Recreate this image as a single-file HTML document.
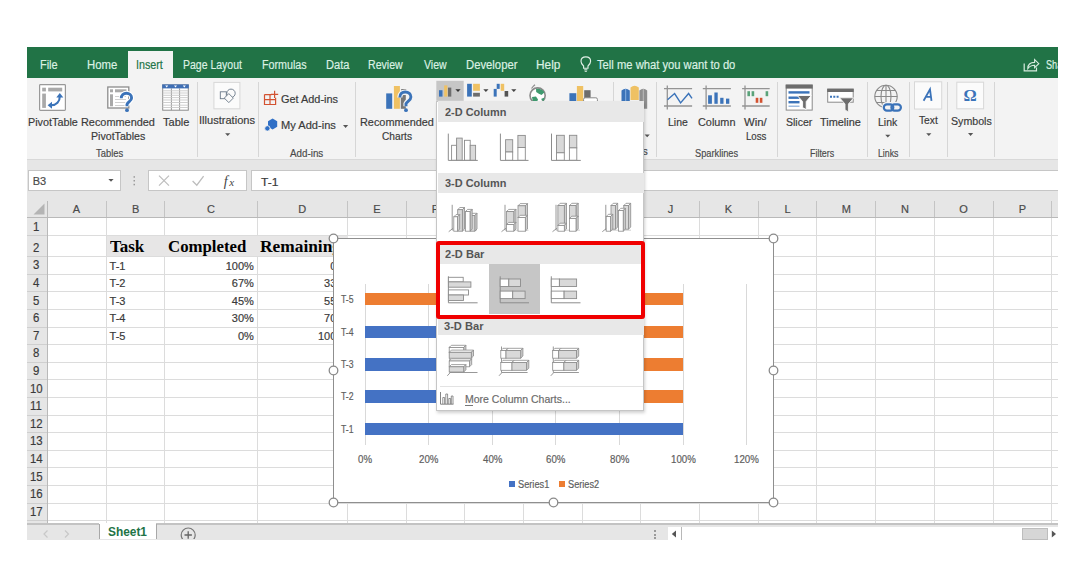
<!DOCTYPE html>
<html><head><meta charset="utf-8"><style>
html,body{margin:0;padding:0}
body{width:1090px;height:579px;position:relative;overflow:hidden;background:#fff;font-family:"Liberation Sans",sans-serif}
svg{display:block}
</style></head><body>
<div style="position:absolute;left:27px;top:47px;width:1030.5px;height:31px;background:#217346;"></div>
<div style="position:absolute;left:128px;top:51px;width:45px;height:27px;background:#f3f3f3;"></div>
<div style="position:absolute;left:27px;top:78px;width:1030.5px;height:82px;background:#f3f3f3;"></div>
<div style="position:absolute;left:27px;top:159px;width:1030.5px;height:1px;background:#d8d8d8;"></div>
<div style="position:absolute;left:197.1px;top:82px;width:1px;height:75px;background:#d6d6d6;"></div>
<div style="position:absolute;left:258.4px;top:82px;width:1px;height:75px;background:#d6d6d6;"></div>
<div style="position:absolute;left:354.5px;top:82px;width:1px;height:75px;background:#d6d6d6;"></div>
<div style="position:absolute;left:613.4px;top:82px;width:1px;height:75px;background:#d6d6d6;"></div>
<div style="position:absolute;left:656.2px;top:82px;width:1px;height:75px;background:#d6d6d6;"></div>
<div style="position:absolute;left:777.3px;top:82px;width:1px;height:75px;background:#d6d6d6;"></div>
<div style="position:absolute;left:866.7px;top:82px;width:1px;height:75px;background:#d6d6d6;"></div>
<div style="position:absolute;left:909.1px;top:82px;width:1px;height:75px;background:#d6d6d6;"></div>
<div style="position:absolute;left:947.4px;top:82px;width:1px;height:75px;background:#d6d6d6;"></div>
<div style="position:absolute;left:993.9px;top:82px;width:1px;height:75px;background:#d6d6d6;"></div>
<svg style="position:absolute;left:0;top:0" width="1090" height="579" viewBox="0 0 1090 579">
<rect x="39.6" y="84.6" width="25.8" height="25.8" rx="0.8" fill="#fff" stroke="#999" stroke-width="1.2"/>
<rect x="42.2" y="87.7" width="3.7" height="3.7" fill="#a9a9a9"/>
<rect x="48.2" y="87.7" width="14" height="3.7" fill="#a9a9a9"/>
<rect x="42.2" y="93.6" width="3.7" height="14.3" fill="#a9a9a9"/>
<path d="M51 105.3 C56.5 105.3 59.8 101.5 59.8 96.5" stroke="#3b73b9" stroke-width="2.1" fill="none"/>
<path d="M47.6 105.3 L52 101.8 L52 108.8 Z" fill="#3b73b9"/>
<path d="M59.8 93 L56.3 97.4 L63.3 97.4 Z" fill="#3b73b9"/>

<rect x="107.8" y="87" width="21" height="21" fill="#fff" stroke="#8c8c8c" stroke-width="1.3"/>
<rect x="110" y="89.3" width="3" height="3" fill="#a9a9a9"/>
<rect x="115" y="89.3" width="11.5" height="3" fill="#a9a9a9"/>
<rect x="110" y="94.3" width="3" height="12" fill="#a9a9a9"/>
<path d="M115 96.5 H126 M115 99.5 H126 M115 102.5 H126 M115 105.5 H126" stroke="#d0d0d0" stroke-width="1"/>
<path d="M121.3 98.3 C121.3 95 123.6 93.3 126.4 93.3 C129.4 93.3 131.6 95.3 131.6 98 C131.6 101.2 127.8 101.8 127 104.5 L127 106.3" stroke="#fff" stroke-width="5" fill="none"/>
<path d="M121.3 98.3 C121.3 95 123.6 93.3 126.4 93.3 C129.4 93.3 131.6 95.3 131.6 98 C131.6 101.2 127.8 101.8 127 104.5 L127 106.3" stroke="#3b73b9" stroke-width="2.9" fill="none"/>
<circle cx="127" cy="110.2" r="1.9" fill="#3b73b9"/>

<rect x="162.7" y="84.9" width="25.6" height="25.3" fill="#fff" stroke="#8c8c8c" stroke-width="1"/>
<path d="M171.4 88.4 V110.2 M179.6 88.4 V110.2" stroke="#9a9a9a" stroke-width="1"/>
<path d="M162.7 90.8 H188.3 M162.7 93 H188.3 M162.7 95.3 H188.3 M162.7 97.6 H188.3 M162.7 100 H188.3 M162.7 102.5 H188.3 M162.7 105.2 H188.3 M162.7 107.5 H188.3" stroke="#c9c9c9" stroke-width="0.9"/>
<rect x="162.2" y="84.4" width="26.6" height="4" fill="#3f6fb5"/>
<path d="M165.2 85.4 L168.2 85.4 L166.7 87.4Z M174 85.4 L177 85.4 L175.5 87.4Z M182.8 85.4 L185.8 85.4 L184.3 87.4Z" fill="#fff"/>

<rect x="213.9" y="82.4" width="26" height="26.4" fill="#fbfbfb" stroke="#d8d8d8" stroke-width="1"/>
<rect x="220.3" y="91.8" width="6" height="6.9" fill="none" stroke="#6a7888" stroke-width="0.9"/>
<circle cx="231" cy="93.3" r="4.2" fill="none" stroke="#6a7888" stroke-width="0.9"/>
<path d="M228.8 93.6 L233.3 98.1 L228.8 102.6 L224.3 98.1 Z" fill="#fbfbfb" stroke="#6a7888" stroke-width="0.9"/>
<path d="M225.1 133.29999999999998 L230.29999999999998 133.29999999999998 L227.7 136.1 Z" fill="#555"/>

<path d="M264.5 94.6 H271.5 M264.5 94.6 V104.5 H275.6 V97.8 M270 94.6 V104.5 M264.5 99.6 H275.6" stroke="#d35230" fill="none" stroke-width="1.2"/>
<path d="M271 94.4 H278.2 M274.6 90.8 V98" stroke="#d35230" stroke-width="1.2"/>
<path d="M272.6 118.6 L277.2 121.3 L277.2 126.7 L272.6 129.4 L268 126.7 L268 121.3 Z" fill="#2f6fc6"/>
<circle cx="267.4" cy="128.4" r="2.7" fill="#2f6fc6" stroke="#f3f3f3" stroke-width="0.9"/>
<path d="M343.0 125.10000000000001 L348.20000000000005 125.10000000000001 L345.6 127.9 Z" fill="#555"/>

<rect x="386.2" y="93.4" width="6" height="15.4" fill="#3b73b9"/>
<rect x="393.9" y="86" width="6" height="22.8" fill="#efc163"/>
<rect x="401.2" y="89" width="5" height="1.8" fill="#777"/>
<rect x="400.8" y="95" width="5" height="13.8" fill="#777"/>
<path d="M399.8 97.4 C399.8 93.8 402.2 92 405.2 92 C408.6 92 410.9 94.2 410.9 97 C410.9 100.4 407.2 101 406 103.7 L406 106.3" stroke="#f3f3f3" stroke-width="5.2" fill="none"/>
<path d="M399.8 97.4 C399.8 93.8 402.2 92 405.2 92 C408.6 92 410.9 94.2 410.9 97 C410.9 100.4 407.2 101 406 103.7 L406 106.3" stroke="#3b73b9" stroke-width="2.9" fill="none"/>
<circle cx="406" cy="110.2" r="1.9" fill="#3b73b9"/>

<rect x="436.3" y="80.8" width="27.4" height="20" fill="#c6c6c6"/>
<rect x="439" y="90.2" width="3.5" height="6.4" fill="#3b73b9"/>
<rect x="444.2" y="85.4" width="3.2" height="11.2" fill="#efc163"/>
<rect x="448" y="87.6" width="3.3" height="9" fill="#6d6d6d"/>
<path d="M455.4 89.3 L460.6 89.3 L458 92.1 Z" fill="#333"/>
<rect x="467.1" y="83.8" width="4.7" height="12.8" fill="#3b73b9"/>
<rect x="473.1" y="83.8" width="6.8" height="7" fill="#efc163"/>
<rect x="473.1" y="92.8" width="6.8" height="3.8" fill="#6d6d6d"/>
<path d="M483.29999999999995 89.3 L488.5 89.3 L485.9 92.1 Z" fill="#444"/>
<rect x="493.7" y="88.9" width="3" height="7.7" fill="#3b73b9"/>
<rect x="496.7" y="83.8" width="3" height="5.1" fill="#3b73b9"/>
<rect x="500.7" y="83.8" width="3.5" height="7" fill="#efc163"/>
<rect x="504.6" y="91" width="3.6" height="5.6" fill="#555"/>
<path d="M511.19999999999993 89.3 L516.4 89.3 L513.8 92.1 Z" fill="#444"/>

<circle cx="537.6" cy="95.5" r="7.6" fill="#fff" stroke="#8a8a8a" stroke-width="1.6"/>
<path d="M536 89 C539 88.3 543 89.5 544.3 92.5 L541.5 95 L538.5 93.6 L536.2 92 Z" fill="#3f9a6f"/>
<path d="M532 97 L536 96.5 L538 99.5 L536.5 103 L533 102 Z" fill="#3f9a6f"/>
<path d="M541 99 L544.5 97.5 L543.5 101.5 Z" fill="#3f9a6f"/>
<path d="M531.5 88.5 L533.5 86 M533.5 86 L535 84.8" stroke="#8a8a8a" stroke-width="1.2"/>

<rect x="569.4" y="93.2" width="6.9" height="9" fill="#3b73b9"/>
<rect x="576.9" y="86" width="6.3" height="16" fill="#efc163"/>
<rect x="584.2" y="90.2" width="6.4" height="8" fill="#6d6d6d"/>
<rect x="583.6" y="97.8" width="13.8" height="5" rx="1.5" fill="#fff" stroke="#8a8a8a" stroke-width="1"/>

<path d="M621.5 90.5 Q625.6 87 629.8 90.5 V104 H621.5Z" fill="#3b73b9"/>
<path d="M625.7 88.8 V104" stroke="#9cc0ea" stroke-width="0.8"/>
<path d="M630.5 87.5 Q634.6 84 638.8 87.5 V100 H630.5Z" fill="#efc163"/>
<path d="M639.4 90.5 Q643.3 87 647.2 90.5 V108.8 H639.4Z" fill="#8f8f8f"/>
<path d="M643.3 88.8 V108.8" stroke="#c8c8c8" stroke-width="0.8"/>
<path d="M644.6 134.5 L649.8000000000001 134.5 L647.2 137.3 Z" fill="#555"/>

<path d="M664 88.7 H692.1 M664 106 H692.1 M667.3 85.4 V109.4" stroke="#949494" stroke-width="1.3"/>
<path d="M667.5 99.8 L674.6 93.5 L680.6 102.9 L688.6 93.5 L692 98.3" stroke="#3b73b9" stroke-width="1.4" fill="none"/>
<path d="M702.8 88.7 H730.9 M702.8 106 H730.9 M706.1 85.4 V109.4" stroke="#949494" stroke-width="1.3"/>
<rect x="708.1" y="95.3" width="3.8" height="8.5" fill="#3b73b9"/>
<rect x="714.4" y="92.5" width="3.3" height="11.3" fill="#3b73b9"/>
<rect x="720.2" y="97.8" width="3.3" height="6" fill="#3b73b9"/>
<rect x="726" y="98.6" width="3.3" height="5.2" fill="#3b73b9"/>
<path d="M742.1 88.7 H769.7 M742.1 106 H769.7 M745 85.4 V109.4" stroke="#949494" stroke-width="1.3"/>
<rect x="747.4" y="91.2" width="2.6" height="5" fill="#5aa37a"/>
<rect x="751.6" y="91.2" width="2.6" height="5" fill="#5aa37a"/>
<rect x="755.7" y="97.8" width="2.6" height="5" fill="#d35230"/>
<rect x="759.8" y="97.8" width="2.6" height="5" fill="#d35230"/>
<rect x="765.6" y="91.2" width="2.6" height="5" fill="#5aa37a"/>

<rect x="786.2" y="85.1" width="26" height="25" fill="#fff" stroke="#8a8a8a" stroke-width="1"/>
<rect x="785.7" y="84.6" width="27" height="4" fill="#6d6d6d"/>
<rect x="788.5" y="91.2" width="21" height="2.4" fill="#3b73b9"/>
<rect x="788.5" y="96.5" width="11" height="2.4" fill="#3b73b9"/>
<rect x="788.5" y="101" width="11" height="2.4" fill="#3b73b9"/>
<rect x="788.5" y="105.5" width="11" height="1.5" fill="#9dbbe0"/>
<path d="M797.3 95.5 H811.3 L806.2 101.6 V109.6 L802.6 107.6 V101.6 Z" fill="#6d6d6d" stroke="#fff" stroke-width="0.9"/>

<rect x="827.7" y="89.2" width="25.5" height="13" fill="#fff" stroke="#8a8a8a" stroke-width="1"/>
<rect x="827.2" y="88.7" width="26.5" height="3.3" fill="#6d6d6d"/>
<path d="M830 96.8 H839" stroke="#3b73b9" stroke-width="2" stroke-dasharray="2 1.3"/>
<path d="M839.6 97.8 H853.7 L848.4 104 V111.9 L845 110 V104 Z" fill="#6d6d6d" stroke="#f3f3f3" stroke-width="0.9"/>

<circle cx="886" cy="96.5" r="11.2" fill="none" stroke="#8a8a8a" stroke-width="1.1"/>
<ellipse cx="886" cy="96.5" rx="5" ry="11.2" fill="none" stroke="#8a8a8a" stroke-width="1.1"/>
<path d="M874.8 96.5 H897.2 M876.6 90.5 H895.4 M876.6 102.5 H895.4 M886 85.3 V107.7" stroke="#8a8a8a" stroke-width="1.1"/>
<rect x="881.8" y="102" width="21" height="10.5" rx="5" fill="#f3f3f3"/>
<rect x="883.8" y="104.3" width="9.5" height="6.3" rx="3.1" fill="none" stroke="#3b73b9" stroke-width="2.2"/>
<rect x="891.4" y="104.3" width="9.5" height="6.3" rx="3.1" fill="none" stroke="#3b73b9" stroke-width="2.2"/>
<path d="M885.1999999999999 134.79999999999998 L890.4 134.79999999999998 L887.8 137.6 Z" fill="#555"/>

<rect x="914.5" y="81.8" width="27.2" height="27.2" fill="#fbfbfb" stroke="#d8d8d8" stroke-width="1"/>
<path d="M923.6 100.8 L930 89.3 L931.5 100.8 M925.8 96.8 H931.3" stroke="#3b73b9" stroke-width="1.8" fill="none"/>
<path d="M926.1999999999999 133.29999999999998 L931.4 133.29999999999998 L928.8 136.1 Z" fill="#555"/>
<rect x="956.8" y="82.2" width="26.8" height="26.6" fill="#fbfbfb" stroke="#d8d8d8" stroke-width="1"/>
<text x="970" y="100.8" font-family="Liberation Serif" font-weight="bold" font-size="16.5" fill="#3b73b9" text-anchor="middle">&#937;</text>
<path d="M968.0 133.1 L973.2 133.1 L970.6 135.9 Z" fill="#555"/>

<path d="M1024.2 63.5 V70.8 H1036.5 V67.5" stroke="#d7ecdf" stroke-width="1.2" fill="none"/>
<path d="M1027.8 68.6 C1027.8 64 1030.8 62.4 1034.6 62.4 V59.6 L1038.8 63.7 L1034.6 67.7 V65.2 C1031.8 65.2 1029.4 66.3 1027.8 68.6Z" fill="none" stroke="#d7ecdf" stroke-width="1.1"/>
<path d="M583.6 66 C581.8 64.4 581 62.8 581 61.2 C581 58.6 583.1 56.9 585.8 56.9 C588.5 56.9 590.6 58.6 590.6 61.2 C590.6 62.8 589.8 64.4 588 66 V68.2 H583.6 Z" stroke="#e2f0e7" stroke-width="1.15" fill="none"/>
<path d="M584.2 69.8 H587.4 M584.7 71.3 H586.9" stroke="#e2f0e7" stroke-width="1"/>
</svg>
<div style="position:absolute;left:40.32px;top:64.57px;height:0;white-space:nowrap;font:400 12.5px 'Liberation Sans', sans-serif;line-height:0;color:#dcf1e3;transform:scaleX(0.8755);transform-origin:0 0;-webkit-text-stroke:0.18px #dcf1e3;">File</div>
<div style="position:absolute;left:86.59px;top:64.57px;height:0;white-space:nowrap;font:400 12.5px 'Liberation Sans', sans-serif;line-height:0;color:#dcf1e3;transform:scaleX(0.9076);transform-origin:0 0;-webkit-text-stroke:0.18px #dcf1e3;">Home</div>
<div style="position:absolute;left:136.14px;top:64.57px;height:0;white-space:nowrap;font:400 12.5px 'Liberation Sans', sans-serif;line-height:0;color:#217346;transform:scaleX(0.8574);transform-origin:0 0;-webkit-text-stroke:0.18px #217346;">Insert</div>
<div style="position:absolute;left:182.86px;top:64.57px;height:0;white-space:nowrap;font:400 12.5px 'Liberation Sans', sans-serif;line-height:0;color:#dcf1e3;transform:scaleX(0.8390);transform-origin:0 0;-webkit-text-stroke:0.18px #dcf1e3;">Page Layout</div>
<div style="position:absolute;left:261.54px;top:64.57px;height:0;white-space:nowrap;font:400 12.5px 'Liberation Sans', sans-serif;line-height:0;color:#dcf1e3;transform:scaleX(0.8575);transform-origin:0 0;-webkit-text-stroke:0.18px #dcf1e3;">Formulas</div>
<div style="position:absolute;left:325.51px;top:64.57px;height:0;white-space:nowrap;font:400 12.5px 'Liberation Sans', sans-serif;line-height:0;color:#dcf1e3;transform:scaleX(0.8879);transform-origin:0 0;-webkit-text-stroke:0.18px #dcf1e3;">Data</div>
<div style="position:absolute;left:368.45px;top:64.57px;height:0;white-space:nowrap;font:400 12.5px 'Liberation Sans', sans-serif;line-height:0;color:#dcf1e3;transform:scaleX(0.8472);transform-origin:0 0;-webkit-text-stroke:0.18px #dcf1e3;">Review</div>
<div style="position:absolute;left:423.50px;top:64.57px;height:0;white-space:nowrap;font:400 12.5px 'Liberation Sans', sans-serif;line-height:0;color:#dcf1e3;transform:scaleX(0.8441);transform-origin:0 0;-webkit-text-stroke:0.18px #dcf1e3;">View</div>
<div style="position:absolute;left:466.00px;top:64.57px;height:0;white-space:nowrap;font:400 12.5px 'Liberation Sans', sans-serif;line-height:0;color:#dcf1e3;transform:scaleX(0.9030);transform-origin:0 0;-webkit-text-stroke:0.18px #dcf1e3;">Developer</div>
<div style="position:absolute;left:536.05px;top:64.57px;height:0;white-space:nowrap;font:400 12.5px 'Liberation Sans', sans-serif;line-height:0;color:#dcf1e3;transform:scaleX(0.9493);transform-origin:0 0;-webkit-text-stroke:0.18px #dcf1e3;">Help</div>
<div style="position:absolute;left:596.80px;top:64.57px;height:0;white-space:nowrap;font:400 12.5px 'Liberation Sans', sans-serif;line-height:0;color:#dcf1e3;transform:scaleX(0.8970);transform-origin:0 0;-webkit-text-stroke:0.18px #dcf1e3;">Tell me what you want to do</div>
<div style="position:absolute;left:1045.50px;top:64.57px;height:0;white-space:nowrap;font:400 12.5px 'Liberation Sans', sans-serif;line-height:0;color:#dcf1e3;transform:scaleX(0.7334);transform-origin:0 0;-webkit-text-stroke:0.18px #dcf1e3;">Share</div>
<div style="position:absolute;left:27.50px;top:121.71px;height:0;white-space:nowrap;font:400 11.5px 'Liberation Sans', sans-serif;line-height:0;color:#3a3a3a;transform:scaleX(0.9399);transform-origin:0 0;-webkit-text-stroke:0.18px #3a3a3a;">PivotTable</div>
<div style="position:absolute;left:81.10px;top:121.71px;height:0;white-space:nowrap;font:400 11.5px 'Liberation Sans', sans-serif;line-height:0;color:#3a3a3a;transform:scaleX(0.9473);transform-origin:0 0;-webkit-text-stroke:0.18px #3a3a3a;">Recommended</div>
<div style="position:absolute;left:91.00px;top:135.91px;height:0;white-space:nowrap;font:400 11.5px 'Liberation Sans', sans-serif;line-height:0;color:#3a3a3a;transform:scaleX(0.9228);transform-origin:0 0;-webkit-text-stroke:0.18px #3a3a3a;">PivotTables</div>
<div style="position:absolute;left:162.50px;top:121.71px;height:0;white-space:nowrap;font:400 11.5px 'Liberation Sans', sans-serif;line-height:0;color:#3a3a3a;transform:scaleX(0.9595);transform-origin:0 0;-webkit-text-stroke:0.18px #3a3a3a;">Table</div>
<div style="position:absolute;left:96.30px;top:152.76px;height:0;white-space:nowrap;font:400 10.5px 'Liberation Sans', sans-serif;line-height:0;color:#4a4a4a;transform:scaleX(0.8936);transform-origin:0 0;-webkit-text-stroke:0.18px #4a4a4a;">Tables</div>
<div style="position:absolute;left:199.04px;top:120.21px;height:0;white-space:nowrap;font:400 11.5px 'Liberation Sans', sans-serif;line-height:0;color:#3a3a3a;transform:scaleX(0.9632);transform-origin:0 0;-webkit-text-stroke:0.18px #3a3a3a;">Illustrations</div>
<div style="position:absolute;left:280.50px;top:98.81px;height:0;white-space:nowrap;font:400 11.5px 'Liberation Sans', sans-serif;line-height:0;color:#3a3a3a;transform:scaleX(0.9480);transform-origin:0 0;-webkit-text-stroke:0.18px #3a3a3a;">Get Add-ins</div>
<div style="position:absolute;left:280.50px;top:124.71px;height:0;white-space:nowrap;font:400 11.5px 'Liberation Sans', sans-serif;line-height:0;color:#3a3a3a;transform:scaleX(0.9642);transform-origin:0 0;-webkit-text-stroke:0.18px #3a3a3a;">My Add-ins</div>
<div style="position:absolute;left:290.00px;top:152.76px;height:0;white-space:nowrap;font:400 10.5px 'Liberation Sans', sans-serif;line-height:0;color:#4a4a4a;transform:scaleX(0.9335);transform-origin:0 0;-webkit-text-stroke:0.18px #4a4a4a;">Add-ins</div>
<div style="position:absolute;left:359.90px;top:121.71px;height:0;white-space:nowrap;font:400 11.5px 'Liberation Sans', sans-serif;line-height:0;color:#3a3a3a;transform:scaleX(0.9473);transform-origin:0 0;-webkit-text-stroke:0.18px #3a3a3a;">Recommended</div>
<div style="position:absolute;left:381.70px;top:135.91px;height:0;white-space:nowrap;font:400 11.5px 'Liberation Sans', sans-serif;line-height:0;color:#3a3a3a;transform:scaleX(0.8851);transform-origin:0 0;-webkit-text-stroke:0.18px #3a3a3a;">Charts</div>
<div style="position:absolute;left:667.80px;top:121.71px;height:0;white-space:nowrap;font:400 11.5px 'Liberation Sans', sans-serif;line-height:0;color:#3a3a3a;transform:scaleX(0.9088);transform-origin:0 0;-webkit-text-stroke:0.18px #3a3a3a;">Line</div>
<div style="position:absolute;left:697.90px;top:121.71px;height:0;white-space:nowrap;font:400 11.5px 'Liberation Sans', sans-serif;line-height:0;color:#3a3a3a;transform:scaleX(0.9457);transform-origin:0 0;-webkit-text-stroke:0.18px #3a3a3a;">Column</div>
<div style="position:absolute;left:744.10px;top:121.71px;height:0;white-space:nowrap;font:400 11.5px 'Liberation Sans', sans-serif;line-height:0;color:#3a3a3a;transform:scaleX(0.9872);transform-origin:0 0;-webkit-text-stroke:0.18px #3a3a3a;">Win/</div>
<div style="position:absolute;left:745.80px;top:135.91px;height:0;white-space:nowrap;font:400 11.5px 'Liberation Sans', sans-serif;line-height:0;color:#3a3a3a;transform:scaleX(0.8394);transform-origin:0 0;-webkit-text-stroke:0.18px #3a3a3a;">Loss</div>
<div style="position:absolute;left:694.90px;top:152.76px;height:0;white-space:nowrap;font:400 10.5px 'Liberation Sans', sans-serif;line-height:0;color:#4a4a4a;transform:scaleX(0.8796);transform-origin:0 0;-webkit-text-stroke:0.18px #4a4a4a;">Sparklines</div>
<div style="position:absolute;left:785.70px;top:121.71px;height:0;white-space:nowrap;font:400 11.5px 'Liberation Sans', sans-serif;line-height:0;color:#3a3a3a;transform:scaleX(0.9161);transform-origin:0 0;-webkit-text-stroke:0.18px #3a3a3a;">Slicer</div>
<div style="position:absolute;left:819.80px;top:121.71px;height:0;white-space:nowrap;font:400 11.5px 'Liberation Sans', sans-serif;line-height:0;color:#3a3a3a;transform:scaleX(0.9500);transform-origin:0 0;-webkit-text-stroke:0.18px #3a3a3a;">Timeline</div>
<div style="position:absolute;left:809.90px;top:152.76px;height:0;white-space:nowrap;font:400 10.5px 'Liberation Sans', sans-serif;line-height:0;color:#4a4a4a;transform:scaleX(0.8471);transform-origin:0 0;-webkit-text-stroke:0.18px #4a4a4a;">Filters</div>
<div style="position:absolute;left:878.40px;top:121.71px;height:0;white-space:nowrap;font:400 11.5px 'Liberation Sans', sans-serif;line-height:0;color:#3a3a3a;transform:scaleX(0.9088);transform-origin:0 0;-webkit-text-stroke:0.18px #3a3a3a;">Link</div>
<div style="position:absolute;left:877.60px;top:152.76px;height:0;white-space:nowrap;font:400 10.5px 'Liberation Sans', sans-serif;line-height:0;color:#4a4a4a;transform:scaleX(0.8326);transform-origin:0 0;-webkit-text-stroke:0.18px #4a4a4a;">Links</div>
<div style="position:absolute;left:918.90px;top:120.21px;height:0;white-space:nowrap;font:400 11.5px 'Liberation Sans', sans-serif;line-height:0;color:#3a3a3a;transform:scaleX(0.8906);transform-origin:0 0;-webkit-text-stroke:0.18px #3a3a3a;">Text</div>
<div style="position:absolute;left:950.50px;top:120.61px;height:0;white-space:nowrap;font:400 11.5px 'Liberation Sans', sans-serif;line-height:0;color:#3a3a3a;transform:scaleX(0.9245);transform-origin:0 0;-webkit-text-stroke:0.18px #3a3a3a;">Symbols</div>
<div style="position:absolute;left:642.50px;top:150.76px;height:0;white-space:nowrap;font:400 10.5px 'Liberation Sans', sans-serif;line-height:0;color:#4a4a4a;-webkit-text-stroke:0.18px #4a4a4a;">s</div>
<div style="position:absolute;left:1057.5px;top:40px;width:32.5px;height:40px;background:#fff;"></div>
<div style="position:absolute;left:27px;top:160px;width:1030.5px;height:57px;background:#e6e6e6;"></div>
<div style="position:absolute;left:27.5px;top:169.5px;width:93px;height:21.5px;background:#fff;box-sizing:border-box;border:1px solid #c6c6c6"></div>
<div style="position:absolute;left:147.8px;top:169.5px;width:99.6px;height:21.5px;background:#fff;box-sizing:border-box;border:1px solid #c6c6c6"></div>
<div style="position:absolute;left:250.5px;top:169.5px;width:807px;height:21.5px;background:#fff;box-sizing:border-box;border:1px solid #c6c6c6;border-right:none"></div>
<svg style="position:absolute;left:0;top:0" width="1090" height="579" viewBox="0 0 1090 579">
<path d="M108.4 178.89999999999998 L113.6 178.89999999999998 L111 181.7 Z" fill="#555"/>
<rect x="133.5" y="176.2" width="1.5" height="1.5" fill="#9a9a9a"/>
<rect x="133.5" y="180" width="1.5" height="1.5" fill="#9a9a9a"/>
<rect x="133.5" y="183.8" width="1.5" height="1.5" fill="#9a9a9a"/>
<path d="M159 175.6 L169 185.6 M169 175.6 L159 185.6" stroke="#bdbdbd" stroke-width="1.2"/>
<path d="M192.6 181 L196.8 185.2 L203.6 176.2" stroke="#bdbdbd" stroke-width="1.3" fill="none"/>
<text x="223.8" y="185.6" font-family="Liberation Serif" font-style="italic" font-size="14" fill="#444">f</text>
<text x="229.2" y="185.6" font-family="Liberation Serif" font-style="italic" font-size="11" fill="#444">x</text>
</svg>
<div style="position:absolute;left:32.70px;top:181.49px;height:0;white-space:nowrap;font:400 11px 'Liberation Sans', sans-serif;line-height:0;color:#4a4a4a;-webkit-text-stroke:0.18px #4a4a4a;">B3</div>
<div style="position:absolute;left:260.80px;top:181.69px;height:0;white-space:nowrap;font:400 11px 'Liberation Sans', sans-serif;line-height:0;color:#3a3a3a;transform:scaleX(1.0903);transform-origin:0 0;-webkit-text-stroke:0.18px #3a3a3a;">T-1</div>
<div style="position:absolute;left:48px;top:217px;width:1009.5px;height:306px;background:#fff;"></div>
<div style="position:absolute;left:27px;top:217px;width:21px;height:306px;background:#e6e6e6;"></div>
<div style="position:absolute;left:105.5px;top:201px;width:1px;height:16px;background:#c4c4c4;"></div>
<div style="position:absolute;left:164.3px;top:201px;width:1px;height:16px;background:#c4c4c4;"></div>
<div style="position:absolute;left:256.8px;top:201px;width:1px;height:16px;background:#c4c4c4;"></div>
<div style="position:absolute;left:346.8px;top:201px;width:1px;height:16px;background:#c4c4c4;"></div>
<div style="position:absolute;left:405.5px;top:201px;width:1px;height:16px;background:#c4c4c4;"></div>
<div style="position:absolute;left:464.20000000000005px;top:201px;width:1px;height:16px;background:#c4c4c4;"></div>
<div style="position:absolute;left:522.9000000000001px;top:201px;width:1px;height:16px;background:#c4c4c4;"></div>
<div style="position:absolute;left:581.6px;top:201px;width:1px;height:16px;background:#c4c4c4;"></div>
<div style="position:absolute;left:640.3px;top:201px;width:1px;height:16px;background:#c4c4c4;"></div>
<div style="position:absolute;left:699.0px;top:201px;width:1px;height:16px;background:#c4c4c4;"></div>
<div style="position:absolute;left:757.7px;top:201px;width:1px;height:16px;background:#c4c4c4;"></div>
<div style="position:absolute;left:816.4000000000001px;top:201px;width:1px;height:16px;background:#c4c4c4;"></div>
<div style="position:absolute;left:875.1000000000001px;top:201px;width:1px;height:16px;background:#c4c4c4;"></div>
<div style="position:absolute;left:933.8px;top:201px;width:1px;height:16px;background:#c4c4c4;"></div>
<div style="position:absolute;left:992.5px;top:201px;width:1px;height:16px;background:#c4c4c4;"></div>
<div style="position:absolute;left:1051.2px;top:201px;width:1px;height:16px;background:#c4c4c4;"></div>
<div style="position:absolute;left:27px;top:217px;width:1030.5px;height:1px;background:#b9b9b9;"></div>
<div style="position:absolute;left:47px;top:201px;width:1px;height:322px;background:#b9b9b9;"></div>
<div style="position:absolute;left:106px;top:235.5px;width:242px;height:20.7px;background:#e7e6e6;"></div>
<div style="position:absolute;left:48px;top:235px;width:1009.5px;height:1px;background:#dcdcdc;"></div>
<div style="position:absolute;left:27px;top:235px;width:20px;height:1px;background:#cfcfcf;"></div>
<div style="position:absolute;left:48px;top:256px;width:1009.5px;height:1px;background:#dcdcdc;"></div>
<div style="position:absolute;left:27px;top:256px;width:20px;height:1px;background:#cfcfcf;"></div>
<div style="position:absolute;left:48px;top:274px;width:1009.5px;height:1px;background:#dcdcdc;"></div>
<div style="position:absolute;left:27px;top:274px;width:20px;height:1px;background:#cfcfcf;"></div>
<div style="position:absolute;left:48px;top:291px;width:1009.5px;height:1px;background:#dcdcdc;"></div>
<div style="position:absolute;left:27px;top:291px;width:20px;height:1px;background:#cfcfcf;"></div>
<div style="position:absolute;left:48px;top:309px;width:1009.5px;height:1px;background:#dcdcdc;"></div>
<div style="position:absolute;left:27px;top:309px;width:20px;height:1px;background:#cfcfcf;"></div>
<div style="position:absolute;left:48px;top:327px;width:1009.5px;height:1px;background:#dcdcdc;"></div>
<div style="position:absolute;left:27px;top:327px;width:20px;height:1px;background:#cfcfcf;"></div>
<div style="position:absolute;left:48px;top:344px;width:1009.5px;height:1px;background:#dcdcdc;"></div>
<div style="position:absolute;left:27px;top:344px;width:20px;height:1px;background:#cfcfcf;"></div>
<div style="position:absolute;left:48px;top:362px;width:1009.5px;height:1px;background:#dcdcdc;"></div>
<div style="position:absolute;left:27px;top:362px;width:20px;height:1px;background:#cfcfcf;"></div>
<div style="position:absolute;left:48px;top:379px;width:1009.5px;height:1px;background:#dcdcdc;"></div>
<div style="position:absolute;left:27px;top:379px;width:20px;height:1px;background:#cfcfcf;"></div>
<div style="position:absolute;left:48px;top:397px;width:1009.5px;height:1px;background:#dcdcdc;"></div>
<div style="position:absolute;left:27px;top:397px;width:20px;height:1px;background:#cfcfcf;"></div>
<div style="position:absolute;left:48px;top:415px;width:1009.5px;height:1px;background:#dcdcdc;"></div>
<div style="position:absolute;left:27px;top:415px;width:20px;height:1px;background:#cfcfcf;"></div>
<div style="position:absolute;left:48px;top:432px;width:1009.5px;height:1px;background:#dcdcdc;"></div>
<div style="position:absolute;left:27px;top:432px;width:20px;height:1px;background:#cfcfcf;"></div>
<div style="position:absolute;left:48px;top:450px;width:1009.5px;height:1px;background:#dcdcdc;"></div>
<div style="position:absolute;left:27px;top:450px;width:20px;height:1px;background:#cfcfcf;"></div>
<div style="position:absolute;left:48px;top:467px;width:1009.5px;height:1px;background:#dcdcdc;"></div>
<div style="position:absolute;left:27px;top:467px;width:20px;height:1px;background:#cfcfcf;"></div>
<div style="position:absolute;left:48px;top:485px;width:1009.5px;height:1px;background:#dcdcdc;"></div>
<div style="position:absolute;left:27px;top:485px;width:20px;height:1px;background:#cfcfcf;"></div>
<div style="position:absolute;left:48px;top:503px;width:1009.5px;height:1px;background:#dcdcdc;"></div>
<div style="position:absolute;left:27px;top:503px;width:20px;height:1px;background:#cfcfcf;"></div>
<div style="position:absolute;left:48px;top:520px;width:1009.5px;height:1px;background:#dcdcdc;"></div>
<div style="position:absolute;left:27px;top:520px;width:20px;height:1px;background:#cfcfcf;"></div>
<div style="position:absolute;left:105.5px;top:218px;width:1px;height:305px;background:#dcdcdc;"></div>
<div style="position:absolute;left:164.3px;top:218px;width:1px;height:305px;background:#dcdcdc;"></div>
<div style="position:absolute;left:256.8px;top:218px;width:1px;height:305px;background:#dcdcdc;"></div>
<div style="position:absolute;left:346.8px;top:218px;width:1px;height:305px;background:#dcdcdc;"></div>
<div style="position:absolute;left:405.5px;top:218px;width:1px;height:305px;background:#dcdcdc;"></div>
<div style="position:absolute;left:464.20000000000005px;top:218px;width:1px;height:305px;background:#dcdcdc;"></div>
<div style="position:absolute;left:522.9000000000001px;top:218px;width:1px;height:305px;background:#dcdcdc;"></div>
<div style="position:absolute;left:581.6px;top:218px;width:1px;height:305px;background:#dcdcdc;"></div>
<div style="position:absolute;left:640.3px;top:218px;width:1px;height:305px;background:#dcdcdc;"></div>
<div style="position:absolute;left:699.0px;top:218px;width:1px;height:305px;background:#dcdcdc;"></div>
<div style="position:absolute;left:757.7px;top:218px;width:1px;height:305px;background:#dcdcdc;"></div>
<div style="position:absolute;left:816.4000000000001px;top:218px;width:1px;height:305px;background:#dcdcdc;"></div>
<div style="position:absolute;left:875.1000000000001px;top:218px;width:1px;height:305px;background:#dcdcdc;"></div>
<div style="position:absolute;left:933.8px;top:218px;width:1px;height:305px;background:#dcdcdc;"></div>
<div style="position:absolute;left:992.5px;top:218px;width:1px;height:305px;background:#dcdcdc;"></div>
<div style="position:absolute;left:1051.2px;top:218px;width:1px;height:305px;background:#dcdcdc;"></div>
<div style="position:absolute;left:107px;top:236px;width:241px;height:20px;background:#e7e6e6;"></div>
<svg style="position:absolute;left:33px;top:203px" width="12" height="12" viewBox="0 0 12 12"><path d="M11.5 0.5 L11.5 11.5 L0.5 11.5 Z" fill="#b4b4b4"/></svg>
<div style="position:absolute;left:72.80px;top:208.89px;height:0;white-space:nowrap;font:400 11px 'Liberation Sans', sans-serif;line-height:0;color:#4a4a4a;-webkit-text-stroke:0.18px #4a4a4a;">A</div>
<div style="position:absolute;left:131.90px;top:208.89px;height:0;white-space:nowrap;font:400 11px 'Liberation Sans', sans-serif;line-height:0;color:#4a4a4a;-webkit-text-stroke:0.18px #4a4a4a;">B</div>
<div style="position:absolute;left:207.05px;top:208.89px;height:0;white-space:nowrap;font:400 11px 'Liberation Sans', sans-serif;line-height:0;color:#4a4a4a;-webkit-text-stroke:0.18px #4a4a4a;">C</div>
<div style="position:absolute;left:298.30px;top:208.89px;height:0;white-space:nowrap;font:400 11px 'Liberation Sans', sans-serif;line-height:0;color:#4a4a4a;-webkit-text-stroke:0.18px #4a4a4a;">D</div>
<div style="position:absolute;left:373.15px;top:208.89px;height:0;white-space:nowrap;font:400 11px 'Liberation Sans', sans-serif;line-height:0;color:#4a4a4a;-webkit-text-stroke:0.18px #4a4a4a;">E</div>
<div style="position:absolute;left:431.85px;top:208.89px;height:0;white-space:nowrap;font:400 11px 'Liberation Sans', sans-serif;line-height:0;color:#4a4a4a;-webkit-text-stroke:0.18px #4a4a4a;">F</div>
<div style="position:absolute;left:490.05px;top:208.89px;height:0;white-space:nowrap;font:400 11px 'Liberation Sans', sans-serif;line-height:0;color:#4a4a4a;-webkit-text-stroke:0.18px #4a4a4a;">G</div>
<div style="position:absolute;left:548.75px;top:208.89px;height:0;white-space:nowrap;font:400 11px 'Liberation Sans', sans-serif;line-height:0;color:#4a4a4a;-webkit-text-stroke:0.18px #4a4a4a;">H</div>
<div style="position:absolute;left:609.45px;top:208.89px;height:0;white-space:nowrap;font:400 11px 'Liberation Sans', sans-serif;line-height:0;color:#4a4a4a;-webkit-text-stroke:0.18px #4a4a4a;">I</div>
<div style="position:absolute;left:667.65px;top:208.89px;height:0;white-space:nowrap;font:400 11px 'Liberation Sans', sans-serif;line-height:0;color:#4a4a4a;-webkit-text-stroke:0.18px #4a4a4a;">J</div>
<div style="position:absolute;left:724.85px;top:208.89px;height:0;white-space:nowrap;font:400 11px 'Liberation Sans', sans-serif;line-height:0;color:#4a4a4a;-webkit-text-stroke:0.18px #4a4a4a;">K</div>
<div style="position:absolute;left:784.55px;top:208.89px;height:0;white-space:nowrap;font:400 11px 'Liberation Sans', sans-serif;line-height:0;color:#4a4a4a;-webkit-text-stroke:0.18px #4a4a4a;">L</div>
<div style="position:absolute;left:841.75px;top:208.89px;height:0;white-space:nowrap;font:400 11px 'Liberation Sans', sans-serif;line-height:0;color:#4a4a4a;-webkit-text-stroke:0.18px #4a4a4a;">M</div>
<div style="position:absolute;left:900.95px;top:208.89px;height:0;white-space:nowrap;font:400 11px 'Liberation Sans', sans-serif;line-height:0;color:#4a4a4a;-webkit-text-stroke:0.18px #4a4a4a;">N</div>
<div style="position:absolute;left:959.15px;top:208.89px;height:0;white-space:nowrap;font:400 11px 'Liberation Sans', sans-serif;line-height:0;color:#4a4a4a;-webkit-text-stroke:0.18px #4a4a4a;">O</div>
<div style="position:absolute;left:1018.85px;top:208.89px;height:0;white-space:nowrap;font:400 11px 'Liberation Sans', sans-serif;line-height:0;color:#4a4a4a;-webkit-text-stroke:0.18px #4a4a4a;">P</div>
<div style="position:absolute;left:32.67px;top:226.94px;height:0;white-space:nowrap;font:400 12px 'Liberation Sans', sans-serif;line-height:0;color:#3a3a3a;transform:scaleX(0.9500);transform-origin:0 0;-webkit-text-stroke:0.18px #3a3a3a;">1</div>
<div style="position:absolute;left:32.67px;top:247.84px;height:0;white-space:nowrap;font:400 12px 'Liberation Sans', sans-serif;line-height:0;color:#3a3a3a;transform:scaleX(0.9500);transform-origin:0 0;-webkit-text-stroke:0.18px #3a3a3a;">2</div>
<div style="position:absolute;left:32.67px;top:265.44px;height:0;white-space:nowrap;font:400 12px 'Liberation Sans', sans-serif;line-height:0;color:#3a3a3a;transform:scaleX(0.9500);transform-origin:0 0;-webkit-text-stroke:0.18px #3a3a3a;">3</div>
<div style="position:absolute;left:32.67px;top:283.04px;height:0;white-space:nowrap;font:400 12px 'Liberation Sans', sans-serif;line-height:0;color:#3a3a3a;transform:scaleX(0.9500);transform-origin:0 0;-webkit-text-stroke:0.18px #3a3a3a;">4</div>
<div style="position:absolute;left:32.67px;top:300.64px;height:0;white-space:nowrap;font:400 12px 'Liberation Sans', sans-serif;line-height:0;color:#3a3a3a;transform:scaleX(0.9500);transform-origin:0 0;-webkit-text-stroke:0.18px #3a3a3a;">5</div>
<div style="position:absolute;left:32.67px;top:318.24px;height:0;white-space:nowrap;font:400 12px 'Liberation Sans', sans-serif;line-height:0;color:#3a3a3a;transform:scaleX(0.9500);transform-origin:0 0;-webkit-text-stroke:0.18px #3a3a3a;">6</div>
<div style="position:absolute;left:32.67px;top:335.84px;height:0;white-space:nowrap;font:400 12px 'Liberation Sans', sans-serif;line-height:0;color:#3a3a3a;transform:scaleX(0.9500);transform-origin:0 0;-webkit-text-stroke:0.18px #3a3a3a;">7</div>
<div style="position:absolute;left:32.67px;top:353.44px;height:0;white-space:nowrap;font:400 12px 'Liberation Sans', sans-serif;line-height:0;color:#3a3a3a;transform:scaleX(0.9500);transform-origin:0 0;-webkit-text-stroke:0.18px #3a3a3a;">8</div>
<div style="position:absolute;left:32.67px;top:371.04px;height:0;white-space:nowrap;font:400 12px 'Liberation Sans', sans-serif;line-height:0;color:#3a3a3a;transform:scaleX(0.9500);transform-origin:0 0;-webkit-text-stroke:0.18px #3a3a3a;">9</div>
<div style="position:absolute;left:29.50px;top:388.64px;height:0;white-space:nowrap;font:400 12px 'Liberation Sans', sans-serif;line-height:0;color:#3a3a3a;transform:scaleX(0.9500);transform-origin:0 0;-webkit-text-stroke:0.18px #3a3a3a;">10</div>
<div style="position:absolute;left:29.93px;top:406.24px;height:0;white-space:nowrap;font:400 12px 'Liberation Sans', sans-serif;line-height:0;color:#3a3a3a;transform:scaleX(0.9500);transform-origin:0 0;-webkit-text-stroke:0.18px #3a3a3a;">11</div>
<div style="position:absolute;left:29.50px;top:423.84px;height:0;white-space:nowrap;font:400 12px 'Liberation Sans', sans-serif;line-height:0;color:#3a3a3a;transform:scaleX(0.9500);transform-origin:0 0;-webkit-text-stroke:0.18px #3a3a3a;">12</div>
<div style="position:absolute;left:29.50px;top:441.44px;height:0;white-space:nowrap;font:400 12px 'Liberation Sans', sans-serif;line-height:0;color:#3a3a3a;transform:scaleX(0.9500);transform-origin:0 0;-webkit-text-stroke:0.18px #3a3a3a;">13</div>
<div style="position:absolute;left:29.50px;top:459.04px;height:0;white-space:nowrap;font:400 12px 'Liberation Sans', sans-serif;line-height:0;color:#3a3a3a;transform:scaleX(0.9500);transform-origin:0 0;-webkit-text-stroke:0.18px #3a3a3a;">14</div>
<div style="position:absolute;left:29.50px;top:476.64px;height:0;white-space:nowrap;font:400 12px 'Liberation Sans', sans-serif;line-height:0;color:#3a3a3a;transform:scaleX(0.9500);transform-origin:0 0;-webkit-text-stroke:0.18px #3a3a3a;">15</div>
<div style="position:absolute;left:29.50px;top:494.24px;height:0;white-space:nowrap;font:400 12px 'Liberation Sans', sans-serif;line-height:0;color:#3a3a3a;transform:scaleX(0.9500);transform-origin:0 0;-webkit-text-stroke:0.18px #3a3a3a;">16</div>
<div style="position:absolute;left:29.50px;top:511.84px;height:0;white-space:nowrap;font:400 12px 'Liberation Sans', sans-serif;line-height:0;color:#3a3a3a;transform:scaleX(0.9500);transform-origin:0 0;-webkit-text-stroke:0.18px #3a3a3a;">17</div>
<div style="position:absolute;left:109.60px;top:246.60px;height:0;white-space:nowrap;font:700 16px 'Liberation Serif', serif;line-height:0;color:#000;transform:scaleX(1.0608);transform-origin:0 0;">Task</div>
<div style="position:absolute;left:168.10px;top:246.60px;height:0;white-space:nowrap;font:700 16px 'Liberation Serif', serif;line-height:0;color:#000;transform:scaleX(1.0501);transform-origin:0 0;">Completed</div>
<div style="position:absolute;left:260.20px;top:246.60px;height:0;white-space:nowrap;font:700 16px 'Liberation Serif', serif;line-height:0;color:#000;transform:scaleX(1.0850);transform-origin:0 0;">Remaining</div>
<div style="position:absolute;left:109.60px;top:265.69px;height:0;white-space:nowrap;font:400 11px 'Liberation Sans', sans-serif;line-height:0;color:#3a3a3a;-webkit-text-stroke:0.18px #3a3a3a;">T-1</div>
<div style="position:absolute;left:225.75px;top:265.69px;height:0;white-space:nowrap;font:400 11px 'Liberation Sans', sans-serif;line-height:0;color:#3a3a3a;-webkit-text-stroke:0.18px #3a3a3a;">100%</div>
<div style="position:absolute;left:330.20px;top:265.69px;height:0;white-space:nowrap;font:400 11px 'Liberation Sans', sans-serif;line-height:0;color:#3a3a3a;-webkit-text-stroke:0.18px #3a3a3a;">0</div>
<div style="position:absolute;left:109.60px;top:283.29px;height:0;white-space:nowrap;font:400 11px 'Liberation Sans', sans-serif;line-height:0;color:#3a3a3a;-webkit-text-stroke:0.18px #3a3a3a;">T-2</div>
<div style="position:absolute;left:231.86px;top:283.29px;height:0;white-space:nowrap;font:400 11px 'Liberation Sans', sans-serif;line-height:0;color:#3a3a3a;-webkit-text-stroke:0.18px #3a3a3a;">67%</div>
<div style="position:absolute;left:324.08px;top:283.29px;height:0;white-space:nowrap;font:400 11px 'Liberation Sans', sans-serif;line-height:0;color:#3a3a3a;-webkit-text-stroke:0.18px #3a3a3a;">33</div>
<div style="position:absolute;left:109.60px;top:300.89px;height:0;white-space:nowrap;font:400 11px 'Liberation Sans', sans-serif;line-height:0;color:#3a3a3a;-webkit-text-stroke:0.18px #3a3a3a;">T-3</div>
<div style="position:absolute;left:231.86px;top:300.89px;height:0;white-space:nowrap;font:400 11px 'Liberation Sans', sans-serif;line-height:0;color:#3a3a3a;-webkit-text-stroke:0.18px #3a3a3a;">45%</div>
<div style="position:absolute;left:324.08px;top:300.89px;height:0;white-space:nowrap;font:400 11px 'Liberation Sans', sans-serif;line-height:0;color:#3a3a3a;-webkit-text-stroke:0.18px #3a3a3a;">55</div>
<div style="position:absolute;left:109.60px;top:318.49px;height:0;white-space:nowrap;font:400 11px 'Liberation Sans', sans-serif;line-height:0;color:#3a3a3a;-webkit-text-stroke:0.18px #3a3a3a;">T-4</div>
<div style="position:absolute;left:231.86px;top:318.49px;height:0;white-space:nowrap;font:400 11px 'Liberation Sans', sans-serif;line-height:0;color:#3a3a3a;-webkit-text-stroke:0.18px #3a3a3a;">30%</div>
<div style="position:absolute;left:324.08px;top:318.49px;height:0;white-space:nowrap;font:400 11px 'Liberation Sans', sans-serif;line-height:0;color:#3a3a3a;-webkit-text-stroke:0.18px #3a3a3a;">70</div>
<div style="position:absolute;left:109.60px;top:336.09px;height:0;white-space:nowrap;font:400 11px 'Liberation Sans', sans-serif;line-height:0;color:#3a3a3a;-webkit-text-stroke:0.18px #3a3a3a;">T-5</div>
<div style="position:absolute;left:237.98px;top:336.09px;height:0;white-space:nowrap;font:400 11px 'Liberation Sans', sans-serif;line-height:0;color:#3a3a3a;-webkit-text-stroke:0.18px #3a3a3a;">0%</div>
<div style="position:absolute;left:317.96px;top:336.09px;height:0;white-space:nowrap;font:400 11px 'Liberation Sans', sans-serif;line-height:0;color:#3a3a3a;-webkit-text-stroke:0.18px #3a3a3a;">100</div>
<div style="position:absolute;left:27px;top:523px;width:1030.5px;height:17px;background:#e6e6e6;"></div>
<div style="position:absolute;left:27px;top:523px;width:1030.5px;height:1.5px;background:#c3c3c3;"></div>
<div style="position:absolute;left:99px;top:523px;width:57px;height:16px;background:#fff;"></div>
<div style="position:absolute;left:98.5px;top:524px;width:1px;height:15px;background:#a8a8a8;"></div>
<div style="position:absolute;left:155.5px;top:524px;width:1px;height:15px;background:#a8a8a8;"></div>
<div style="position:absolute;left:667.5px;top:527px;width:390px;height:12.5px;background:#fff;"></div>
<div style="position:absolute;left:680.5px;top:527px;width:1px;height:12.5px;background:#b8b8b8;"></div>
<div style="position:absolute;left:1021.5px;top:527.5px;width:26px;height:12px;background:#d6d6d6;box-sizing:border-box;border:1px solid #bdbdbd"></div>
<div style="position:absolute;left:653.8px;top:530px;width:2px;height:2px;background:#9a9a9a;"></div>
<div style="position:absolute;left:653.8px;top:533.5px;width:2px;height:2px;background:#9a9a9a;"></div>
<div style="position:absolute;left:653.8px;top:537px;width:2px;height:2px;background:#9a9a9a;"></div>
<svg style="position:absolute;left:671px;top:530px" width="6" height="8" viewBox="0 0 6 8"><path d="M5 0.5 L5 7.5 L0.8 4 Z" fill="#555"/></svg>
<svg style="position:absolute;left:1050.8px;top:530px" width="6" height="8" viewBox="0 0 6 8"><path d="M0.8 0.5 L0.8 7.5 L5 4 Z" fill="#555"/></svg>
<svg style="position:absolute;left:43px;top:530px" width="6" height="8" viewBox="0 0 6 8"><path d="M4.5 0.5 L1 4 L4.5 7.5" stroke="#c8c8c8" fill="none" stroke-width="1.2"/></svg>
<svg style="position:absolute;left:64px;top:530px" width="6" height="8" viewBox="0 0 6 8"><path d="M1 0.5 L4.5 4 L1 7.5" stroke="#c8c8c8" fill="none" stroke-width="1.2"/></svg>
<svg style="position:absolute;left:180px;top:527px" width="17" height="12" viewBox="0 0 17 12"><circle cx="8.2" cy="8" r="7" fill="none" stroke="#777" stroke-width="1.2"/><path d="M8.2 4.3 V11.7 M4.5 8 H11.9" stroke="#666" stroke-width="1.3"/></svg>
<div style="position:absolute;left:107.50px;top:531.84px;height:0;white-space:nowrap;font:700 12px 'Liberation Sans', sans-serif;line-height:0;color:#217346;transform:scaleX(0.9905);transform-origin:0 0;">Sheet1</div>
<div style="position:absolute;left:332.8px;top:238px;width:441.4px;height:265px;background:#fff;box-sizing:border-box;border:1px solid #8f8f8f"></div>
<div style="position:absolute;left:364.59999999999997px;top:284px;width:1px;height:161px;background:#d9d9d9;"></div>
<div style="position:absolute;left:428.2px;top:284px;width:1px;height:161px;background:#d9d9d9;"></div>
<div style="position:absolute;left:491.79999999999995px;top:284px;width:1px;height:161px;background:#d9d9d9;"></div>
<div style="position:absolute;left:555.4px;top:284px;width:1px;height:161px;background:#d9d9d9;"></div>
<div style="position:absolute;left:619.0px;top:284px;width:1px;height:161px;background:#d9d9d9;"></div>
<div style="position:absolute;left:682.6px;top:284px;width:1px;height:161px;background:#d9d9d9;"></div>
<div style="position:absolute;left:746.1999999999999px;top:284px;width:1px;height:161px;background:#d9d9d9;"></div>
<div style="position:absolute;left:365.2px;top:293.1px;width:318.00000000000006px;height:12.3px;background:#ed7d31;"></div>
<div style="position:absolute;left:365.2px;top:325.7px;width:95.40000000000002px;height:12.3px;background:#4472c4;"></div>
<div style="position:absolute;left:460.6px;top:325.7px;width:222.60000000000002px;height:12.3px;background:#ed7d31;"></div>
<div style="position:absolute;left:365.2px;top:358.3px;width:143.10000000000002px;height:12.3px;background:#4472c4;"></div>
<div style="position:absolute;left:508.3px;top:358.3px;width:174.90000000000003px;height:12.3px;background:#ed7d31;"></div>
<div style="position:absolute;left:365.2px;top:390.3px;width:213.06000000000006px;height:12.3px;background:#4472c4;"></div>
<div style="position:absolute;left:578.26px;top:390.3px;width:104.94000000000001px;height:12.3px;background:#ed7d31;"></div>
<div style="position:absolute;left:365.2px;top:423.0px;width:318.00000000000006px;height:12.3px;background:#4472c4;"></div>
<svg style="position:absolute;left:327.8px;top:233.0px" width="11" height="11" viewBox="0 0 11 11"><circle cx="5.5" cy="5.5" r="4.3" fill="#fff" stroke="#8a8a8a" stroke-width="1.3"/></svg>
<svg style="position:absolute;left:768.2px;top:233.0px" width="11" height="11" viewBox="0 0 11 11"><circle cx="5.5" cy="5.5" r="4.3" fill="#fff" stroke="#8a8a8a" stroke-width="1.3"/></svg>
<svg style="position:absolute;left:548.0px;top:233.0px" width="11" height="11" viewBox="0 0 11 11"><circle cx="5.5" cy="5.5" r="4.3" fill="#fff" stroke="#8a8a8a" stroke-width="1.3"/></svg>
<svg style="position:absolute;left:327.8px;top:365.0px" width="11" height="11" viewBox="0 0 11 11"><circle cx="5.5" cy="5.5" r="4.3" fill="#fff" stroke="#8a8a8a" stroke-width="1.3"/></svg>
<svg style="position:absolute;left:768.2px;top:365.0px" width="11" height="11" viewBox="0 0 11 11"><circle cx="5.5" cy="5.5" r="4.3" fill="#fff" stroke="#8a8a8a" stroke-width="1.3"/></svg>
<svg style="position:absolute;left:327.8px;top:497.0px" width="11" height="11" viewBox="0 0 11 11"><circle cx="5.5" cy="5.5" r="4.3" fill="#fff" stroke="#8a8a8a" stroke-width="1.3"/></svg>
<svg style="position:absolute;left:548.0px;top:497.0px" width="11" height="11" viewBox="0 0 11 11"><circle cx="5.5" cy="5.5" r="4.3" fill="#fff" stroke="#8a8a8a" stroke-width="1.3"/></svg>
<svg style="position:absolute;left:768.2px;top:497.0px" width="11" height="11" viewBox="0 0 11 11"><circle cx="5.5" cy="5.5" r="4.3" fill="#fff" stroke="#8a8a8a" stroke-width="1.3"/></svg>
<div style="position:absolute;left:509.3px;top:481.3px;width:5.5px;height:5.5px;background:#4472c4;"></div>
<div style="position:absolute;left:559.4px;top:481.3px;width:5.5px;height:5.5px;background:#ed7d31;"></div>
<div style="position:absolute;left:341.30px;top:299.93px;height:0;white-space:nowrap;font:400 10px 'Liberation Sans', sans-serif;line-height:0;color:#5e5e5e;transform:scaleX(0.8665);transform-origin:0 0;-webkit-text-stroke:0.18px #5e5e5e;">T-5</div>
<div style="position:absolute;left:341.30px;top:332.53px;height:0;white-space:nowrap;font:400 10px 'Liberation Sans', sans-serif;line-height:0;color:#5e5e5e;transform:scaleX(0.8665);transform-origin:0 0;-webkit-text-stroke:0.18px #5e5e5e;">T-4</div>
<div style="position:absolute;left:341.30px;top:365.13px;height:0;white-space:nowrap;font:400 10px 'Liberation Sans', sans-serif;line-height:0;color:#5e5e5e;transform:scaleX(0.8665);transform-origin:0 0;-webkit-text-stroke:0.18px #5e5e5e;">T-3</div>
<div style="position:absolute;left:341.30px;top:397.13px;height:0;white-space:nowrap;font:400 10px 'Liberation Sans', sans-serif;line-height:0;color:#5e5e5e;transform:scaleX(0.8665);transform-origin:0 0;-webkit-text-stroke:0.18px #5e5e5e;">T-2</div>
<div style="position:absolute;left:341.30px;top:429.83px;height:0;white-space:nowrap;font:400 10px 'Liberation Sans', sans-serif;line-height:0;color:#5e5e5e;transform:scaleX(0.8665);transform-origin:0 0;-webkit-text-stroke:0.18px #5e5e5e;">T-1</div>
<div style="position:absolute;left:358.14px;top:460.03px;height:0;white-space:nowrap;font:400 10px 'Liberation Sans', sans-serif;line-height:0;color:#5e5e5e;transform:scaleX(0.9700);transform-origin:0 0;-webkit-text-stroke:0.18px #5e5e5e;">0%</div>
<div style="position:absolute;left:419.04px;top:460.03px;height:0;white-space:nowrap;font:400 10px 'Liberation Sans', sans-serif;line-height:0;color:#5e5e5e;transform:scaleX(0.9700);transform-origin:0 0;-webkit-text-stroke:0.18px #5e5e5e;">20%</div>
<div style="position:absolute;left:482.64px;top:460.03px;height:0;white-space:nowrap;font:400 10px 'Liberation Sans', sans-serif;line-height:0;color:#5e5e5e;transform:scaleX(0.9700);transform-origin:0 0;-webkit-text-stroke:0.18px #5e5e5e;">40%</div>
<div style="position:absolute;left:546.24px;top:460.03px;height:0;white-space:nowrap;font:400 10px 'Liberation Sans', sans-serif;line-height:0;color:#5e5e5e;transform:scaleX(0.9700);transform-origin:0 0;-webkit-text-stroke:0.18px #5e5e5e;">60%</div>
<div style="position:absolute;left:609.84px;top:460.03px;height:0;white-space:nowrap;font:400 10px 'Liberation Sans', sans-serif;line-height:0;color:#5e5e5e;transform:scaleX(0.9700);transform-origin:0 0;-webkit-text-stroke:0.18px #5e5e5e;">80%</div>
<div style="position:absolute;left:670.74px;top:460.03px;height:0;white-space:nowrap;font:400 10px 'Liberation Sans', sans-serif;line-height:0;color:#5e5e5e;transform:scaleX(0.9700);transform-origin:0 0;-webkit-text-stroke:0.18px #5e5e5e;">100%</div>
<div style="position:absolute;left:734.34px;top:460.03px;height:0;white-space:nowrap;font:400 10px 'Liberation Sans', sans-serif;line-height:0;color:#5e5e5e;transform:scaleX(0.9700);transform-origin:0 0;-webkit-text-stroke:0.18px #5e5e5e;">120%</div>
<div style="position:absolute;left:517.50px;top:484.53px;height:0;white-space:nowrap;font:400 10px 'Liberation Sans', sans-serif;line-height:0;color:#5e5e5e;transform:scaleX(0.9230);transform-origin:0 0;-webkit-text-stroke:0.18px #5e5e5e;">Series1</div>
<div style="position:absolute;left:567.90px;top:484.53px;height:0;white-space:nowrap;font:400 10px 'Liberation Sans', sans-serif;line-height:0;color:#5e5e5e;transform:scaleX(0.9201);transform-origin:0 0;-webkit-text-stroke:0.18px #5e5e5e;">Series2</div>
<div style="position:absolute;left:436px;top:100.5px;width:208px;height:310.7px;background:#fff;border:1px solid #c6c6c6;box-sizing:border-box;box-shadow:1px 2px 3px rgba(0,0,0,0.18)"></div>
<div style="position:absolute;left:437.5px;top:101px;width:206px;height:20.8px;background:#e8e8e8;"></div>
<div style="position:absolute;left:437.5px;top:173px;width:206px;height:19.6px;background:#e8e8e8;"></div>
<div style="position:absolute;left:437.5px;top:245px;width:206px;height:19px;background:#e8e8e8;"></div>
<div style="position:absolute;left:437.5px;top:319.3px;width:206px;height:15.6px;background:#e8e8e8;"></div>
<div style="position:absolute;left:489px;top:264px;width:51px;height:50px;background:#c6c6c6;"></div>
<div style="position:absolute;left:440px;top:386px;width:203px;height:1px;background:#e3e3e3;"></div>
<svg style="position:absolute;left:0;top:0" width="1090" height="579" viewBox="0 0 1090 579"><path d="M448.3 133.6 V160.4 H477.8" stroke="#8c8c8c" stroke-width="1" fill="none"/>
<rect x="451.6" y="145.3" width="5.0" height="14.899999999999977" fill="#fff" stroke="#8c8c8c" stroke-width="0.9"/>
<rect x="456.6" y="138.1" width="5.599999999999966" height="22.099999999999994" fill="#d9d9d9" stroke="#8c8c8c" stroke-width="0.9"/>
<rect x="464.5" y="140.3" width="5.699999999999989" height="19.899999999999977" fill="#fff" stroke="#8c8c8c" stroke-width="0.9"/>
<rect x="470.2" y="145.3" width="5.400000000000034" height="14.899999999999977" fill="#d9d9d9" stroke="#8c8c8c" stroke-width="0.9"/>
<path d="M500.4 133.6 V160.4 H528.5" stroke="#8c8c8c" stroke-width="1" fill="none"/>
<rect x="505.6" y="139.7" width="7.100000000000023" height="12.300000000000011" fill="#d9d9d9" stroke="#8c8c8c" stroke-width="0.9"/><rect x="505.6" y="152" width="7.100000000000023" height="8.199999999999989" fill="#fff" stroke="#8c8c8c" stroke-width="0.9"/>
<rect x="517.9" y="135.4" width="7.399999999999977" height="12.099999999999994" fill="#d9d9d9" stroke="#8c8c8c" stroke-width="0.9"/><rect x="517.9" y="147.5" width="7.399999999999977" height="12.699999999999989" fill="#fff" stroke="#8c8c8c" stroke-width="0.9"/>
<path d="M551.5 133.6 V160.4 H580.8" stroke="#8c8c8c" stroke-width="1" fill="none"/>
<rect x="556.5" y="135.3" width="7.7999999999999545" height="17.5" fill="#d9d9d9" stroke="#8c8c8c" stroke-width="0.9"/><rect x="556.5" y="152.8" width="7.7999999999999545" height="7.399999999999977" fill="#fff" stroke="#8c8c8c" stroke-width="0.9"/>
<rect x="569.4" y="135.3" width="7.399999999999977" height="12.599999999999994" fill="#d9d9d9" stroke="#8c8c8c" stroke-width="0.9"/><rect x="569.4" y="147.9" width="7.399999999999977" height="12.299999999999983" fill="#fff" stroke="#8c8c8c" stroke-width="0.9"/>
<path d="M452.2 204.8 V230.2" stroke="#8c8c8c" stroke-width="0.9"/><path d="M448.7 231.7 L453.2 228.2" stroke="#8c8c8c" stroke-width="0.9"/><path d="M452.2 230.2 H477" stroke="#8c8c8c" stroke-width="0.7" stroke-opacity="0.6"/>
<path d="M457.7 209.7 L459.9 207.5 L464.5 207.5 L462.3 209.7 Z" fill="#fff" stroke="#8c8c8c" stroke-width="0.8"/><path d="M462.3 209.7 L464.5 207.5 L464.5 229.0 L462.3 231.2 Z" fill="#cfcfcf" stroke="#8c8c8c" stroke-width="0.8"/><rect x="457.7" y="209.7" width="4.600000000000023" height="21.5" fill="#d9d9d9" stroke="#8c8c8c" stroke-width="0.8"/>
<path d="M453.8 216.8 L456.0 214.60000000000002 L459.7 214.60000000000002 L457.5 216.8 Z" fill="#fff" stroke="#8c8c8c" stroke-width="0.8"/><path d="M457.5 216.8 L459.7 214.60000000000002 L459.7 229.0 L457.5 231.2 Z" fill="#cfcfcf" stroke="#8c8c8c" stroke-width="0.8"/><rect x="453.8" y="216.8" width="3.6999999999999886" height="14.399999999999977" fill="#fff" stroke="#8c8c8c" stroke-width="0.8"/>
<path d="M470.4 215.5 L472.59999999999997 213.3 L477.0 213.3 L474.8 215.5 Z" fill="#fff" stroke="#8c8c8c" stroke-width="0.8"/><path d="M474.8 215.5 L477.0 213.3 L477.0 229.0 L474.8 231.2 Z" fill="#cfcfcf" stroke="#8c8c8c" stroke-width="0.8"/><rect x="470.4" y="215.5" width="4.400000000000034" height="15.699999999999989" fill="#d9d9d9" stroke="#8c8c8c" stroke-width="0.8"/>
<path d="M465.4 211.6 L467.59999999999997 209.4 L472.2 209.4 L470 211.6 Z" fill="#fff" stroke="#8c8c8c" stroke-width="0.8"/><path d="M470 211.6 L472.2 209.4 L472.2 229.0 L470 231.2 Z" fill="#cfcfcf" stroke="#8c8c8c" stroke-width="0.8"/><rect x="465.4" y="211.6" width="4.600000000000023" height="19.599999999999994" fill="#fff" stroke="#8c8c8c" stroke-width="0.8"/>
<path d="M505 204.8 V230.2" stroke="#8c8c8c" stroke-width="0.9"/><path d="M501.5 231.7 L506 228.2" stroke="#8c8c8c" stroke-width="0.9"/><path d="M505 230.2 H528.5" stroke="#8c8c8c" stroke-width="0.7" stroke-opacity="0.6"/>
<path d="M506.5 211.6 L508.7 209.4 L516.0 209.4 L513.8 211.6 Z" fill="#fff" stroke="#8c8c8c" stroke-width="0.8"/><path d="M513.8 211.6 L516.0 209.4 L516.0 222.4 L513.8 224.6 Z" fill="#cfcfcf" stroke="#8c8c8c" stroke-width="0.8"/><rect x="506.5" y="211.6" width="7.2999999999999545" height="13.0" fill="#d9d9d9" stroke="#8c8c8c" stroke-width="0.8"/>
<path d="M506.5 224.6 L508.7 222.4 L516.0 222.4 L513.8 224.6 Z" fill="#fff" stroke="#8c8c8c" stroke-width="0.8"/><path d="M513.8 224.6 L516.0 222.4 L516.0 229.0 L513.8 231.2 Z" fill="#cfcfcf" stroke="#8c8c8c" stroke-width="0.8"/><rect x="506.5" y="224.6" width="7.2999999999999545" height="6.599999999999994" fill="#fff" stroke="#8c8c8c" stroke-width="0.8"/>
<path d="M518 205.8 L520.2 203.60000000000002 L527.5 203.60000000000002 L525.3 205.8 Z" fill="#fff" stroke="#8c8c8c" stroke-width="0.8"/><path d="M525.3 205.8 L527.5 203.60000000000002 L527.5 215.3 L525.3 217.5 Z" fill="#cfcfcf" stroke="#8c8c8c" stroke-width="0.8"/><rect x="518" y="205.8" width="7.2999999999999545" height="11.699999999999989" fill="#d9d9d9" stroke="#8c8c8c" stroke-width="0.8"/>
<path d="M518 217.5 L520.2 215.3 L527.5 215.3 L525.3 217.5 Z" fill="#fff" stroke="#8c8c8c" stroke-width="0.8"/><path d="M525.3 217.5 L527.5 215.3 L527.5 229.0 L525.3 231.2 Z" fill="#cfcfcf" stroke="#8c8c8c" stroke-width="0.8"/><rect x="518" y="217.5" width="7.2999999999999545" height="13.699999999999989" fill="#fff" stroke="#8c8c8c" stroke-width="0.8"/>
<path d="M556 204.8 V230.2" stroke="#8c8c8c" stroke-width="0.9"/><path d="M552.5 231.7 L557 228.2" stroke="#8c8c8c" stroke-width="0.9"/><path d="M556 230.2 H580" stroke="#8c8c8c" stroke-width="0.7" stroke-opacity="0.6"/>
<path d="M557.9 205.5 L560.1 203.3 L566.5 203.3 L564.3 205.5 Z" fill="#fff" stroke="#8c8c8c" stroke-width="0.8"/><path d="M564.3 205.5 L566.5 203.3 L566.5 223.20000000000002 L564.3 225.4 Z" fill="#cfcfcf" stroke="#8c8c8c" stroke-width="0.8"/><rect x="557.9" y="205.5" width="6.399999999999977" height="19.900000000000006" fill="#d9d9d9" stroke="#8c8c8c" stroke-width="0.8"/>
<path d="M557.9 225.4 L560.1 223.20000000000002 L566.5 223.20000000000002 L564.3 225.4 Z" fill="#fff" stroke="#8c8c8c" stroke-width="0.8"/><path d="M564.3 225.4 L566.5 223.20000000000002 L566.5 229.0 L564.3 231.2 Z" fill="#cfcfcf" stroke="#8c8c8c" stroke-width="0.8"/><rect x="557.9" y="225.4" width="6.399999999999977" height="5.799999999999983" fill="#fff" stroke="#8c8c8c" stroke-width="0.8"/>
<path d="M569.6 205.5 L571.8000000000001 203.3 L578.2 203.3 L576 205.5 Z" fill="#fff" stroke="#8c8c8c" stroke-width="0.8"/><path d="M576 205.5 L578.2 203.3 L578.2 216.20000000000002 L576 218.4 Z" fill="#cfcfcf" stroke="#8c8c8c" stroke-width="0.8"/><rect x="569.6" y="205.5" width="6.399999999999977" height="12.900000000000006" fill="#d9d9d9" stroke="#8c8c8c" stroke-width="0.8"/>
<path d="M569.6 218.4 L571.8000000000001 216.20000000000002 L578.2 216.20000000000002 L576 218.4 Z" fill="#fff" stroke="#8c8c8c" stroke-width="0.8"/><path d="M576 218.4 L578.2 216.20000000000002 L578.2 229.0 L576 231.2 Z" fill="#cfcfcf" stroke="#8c8c8c" stroke-width="0.8"/><rect x="569.6" y="218.4" width="6.399999999999977" height="12.799999999999983" fill="#fff" stroke="#8c8c8c" stroke-width="0.8"/>
<path d="M605.8 204.8 V230.2" stroke="#8c8c8c" stroke-width="0.9"/><path d="M602.3 231.7 L606.8 228.2" stroke="#8c8c8c" stroke-width="0.9"/><path d="M605.8 230.2 H631" stroke="#8c8c8c" stroke-width="0.7" stroke-opacity="0.6"/>
<path d="M611 205.5 L613.2 203.3 L617.7 203.3 L615.5 205.5 Z" fill="#fff" stroke="#8c8c8c" stroke-width="0.8"/><path d="M615.5 205.5 L617.7 203.3 L617.7 227.0 L615.5 229.2 Z" fill="#cfcfcf" stroke="#8c8c8c" stroke-width="0.8"/><rect x="611" y="205.5" width="4.5" height="23.69999999999999" fill="#d9d9d9" stroke="#8c8c8c" stroke-width="0.8"/>
<path d="M623.8 205.5 L626.0 203.3 L630.7 203.3 L628.5 205.5 Z" fill="#fff" stroke="#8c8c8c" stroke-width="0.8"/><path d="M628.5 205.5 L630.7 203.3 L630.7 227.0 L628.5 229.2 Z" fill="#cfcfcf" stroke="#8c8c8c" stroke-width="0.8"/><rect x="623.8" y="205.5" width="4.7000000000000455" height="23.69999999999999" fill="#d9d9d9" stroke="#8c8c8c" stroke-width="0.8"/>
<path d="M606.2 216.5 L608.4000000000001 214.3 L612.8000000000001 214.3 L610.6 216.5 Z" fill="#fff" stroke="#8c8c8c" stroke-width="0.8"/><path d="M610.6 216.5 L612.8000000000001 214.3 L612.8000000000001 229.0 L610.6 231.2 Z" fill="#cfcfcf" stroke="#8c8c8c" stroke-width="0.8"/><rect x="606.2" y="216.5" width="4.399999999999977" height="14.699999999999989" fill="#fff" stroke="#8c8c8c" stroke-width="0.8"/>
<path d="M618.6 210.5 L620.8000000000001 208.3 L625.4000000000001 208.3 L623.2 210.5 Z" fill="#fff" stroke="#8c8c8c" stroke-width="0.8"/><path d="M623.2 210.5 L625.4000000000001 208.3 L625.4000000000001 229.0 L623.2 231.2 Z" fill="#cfcfcf" stroke="#8c8c8c" stroke-width="0.8"/><rect x="618.6" y="210.5" width="4.600000000000023" height="20.69999999999999" fill="#fff" stroke="#8c8c8c" stroke-width="0.8"/>
<path d="M448.4 276.3 V302.8 H477.6" stroke="#8c8c8c" stroke-width="1" fill="none"/>
<rect x="448.4" y="277.3" width="14.800000000000011" height="4.599999999999966" fill="#fff" stroke="#8c8c8c" stroke-width="0.9"/>
<rect x="448.4" y="281.9" width="22.5" height="5.300000000000011" fill="#d9d9d9" stroke="#8c8c8c" stroke-width="0.9"/>
<rect x="448.4" y="289.9" width="20.100000000000023" height="5.100000000000023" fill="#fff" stroke="#8c8c8c" stroke-width="0.9"/>
<rect x="448.4" y="295" width="15.100000000000023" height="5.5" fill="#d9d9d9" stroke="#8c8c8c" stroke-width="0.9"/>
<path d="M500.2 276.3 V302.8 H529" stroke="#8c8c8c" stroke-width="1" fill="none"/>
<rect x="500.2" y="279" width="8.600000000000023" height="7.5" fill="#fff" stroke="#8c8c8c" stroke-width="0.9"/>
<rect x="508.8" y="279" width="11.699999999999989" height="7.5" fill="#d9d9d9" stroke="#8c8c8c" stroke-width="0.9"/>
<rect x="500.2" y="291.1" width="12.500000000000057" height="7.5" fill="#fff" stroke="#8c8c8c" stroke-width="0.9"/>
<rect x="512.7" y="291.1" width="12.399999999999977" height="7.5" fill="#d9d9d9" stroke="#8c8c8c" stroke-width="0.9"/>
<path d="M551.3 276.3 V302.8 H580.5" stroke="#8c8c8c" stroke-width="1" fill="none"/>
<rect x="551.3" y="279" width="8.100000000000023" height="7.5" fill="#fff" stroke="#8c8c8c" stroke-width="0.9"/>
<rect x="559.4" y="279" width="17.200000000000045" height="7.5" fill="#d9d9d9" stroke="#8c8c8c" stroke-width="0.9"/>
<rect x="551.3" y="291.1" width="12.800000000000068" height="7.5" fill="#fff" stroke="#8c8c8c" stroke-width="0.9"/>
<rect x="564.1" y="291.1" width="12.5" height="7.5" fill="#d9d9d9" stroke="#8c8c8c" stroke-width="0.9"/>
<path d="M449.8 346.5 V372.5 H477.5" stroke="#8c8c8c" stroke-width="0.9" fill="none"/><path d="M447.3 375.8 L450.3 372.5" stroke="#8c8c8c" stroke-width="0.9"/>
<path d="M449.2 347.5 L451.4 345.3 L465.9 345.3 L463.7 347.5 Z" fill="#fff" stroke="#8c8c8c" stroke-width="0.8"/><path d="M463.7 347.5 L465.9 345.3 L465.9 350.1 L463.7 352.3 Z" fill="#cfcfcf" stroke="#8c8c8c" stroke-width="0.8"/><rect x="449.2" y="347.5" width="14.5" height="4.800000000000011" fill="#fff" stroke="#8c8c8c" stroke-width="0.8"/>
<path d="M449.2 352.3 L451.4 350.1 L473.5 350.1 L471.3 352.3 Z" fill="#fff" stroke="#8c8c8c" stroke-width="0.8"/><path d="M471.3 352.3 L473.5 350.1 L473.5 356.0 L471.3 358.2 Z" fill="#cfcfcf" stroke="#8c8c8c" stroke-width="0.8"/><rect x="449.2" y="352.3" width="22.100000000000023" height="5.899999999999977" fill="#d9d9d9" stroke="#8c8c8c" stroke-width="0.8"/>
<path d="M449.2 361 L451.4 358.8 L471.7 358.8 L469.5 361 Z" fill="#fff" stroke="#8c8c8c" stroke-width="0.8"/><path d="M469.5 361 L471.7 358.8 L471.7 364.6 L469.5 366.8 Z" fill="#cfcfcf" stroke="#8c8c8c" stroke-width="0.8"/><rect x="449.2" y="361" width="20.30000000000001" height="5.800000000000011" fill="#fff" stroke="#8c8c8c" stroke-width="0.8"/>
<path d="M449.2 366.8 L451.4 364.6 L465.9 364.6 L463.7 366.8 Z" fill="#fff" stroke="#8c8c8c" stroke-width="0.8"/><path d="M463.7 366.8 L465.9 364.6 L465.9 369.8 L463.7 372 Z" fill="#cfcfcf" stroke="#8c8c8c" stroke-width="0.8"/><rect x="449.2" y="366.8" width="14.5" height="5.199999999999989" fill="#d9d9d9" stroke="#8c8c8c" stroke-width="0.8"/>
<path d="M501.5 346.5 V372.5 H527.6" stroke="#8c8c8c" stroke-width="0.9" fill="none"/><path d="M499 375.8 L502 372.5" stroke="#8c8c8c" stroke-width="0.9"/>
<path d="M500.8 350.5 L503.0 348.3 L508.2 348.3 L506 350.5 Z" fill="#fff" stroke="#8c8c8c" stroke-width="0.8"/><path d="M506 350.5 L508.2 348.3 L508.2 356.0 L506 358.2 Z" fill="#cfcfcf" stroke="#8c8c8c" stroke-width="0.8"/><rect x="500.8" y="350.5" width="5.199999999999989" height="7.699999999999989" fill="#fff" stroke="#8c8c8c" stroke-width="0.8"/>
<path d="M506 350.5 L508.2 348.3 L522.9000000000001 348.3 L520.7 350.5 Z" fill="#fff" stroke="#8c8c8c" stroke-width="0.8"/><path d="M520.7 350.5 L522.9000000000001 348.3 L522.9000000000001 356.0 L520.7 358.2 Z" fill="#cfcfcf" stroke="#8c8c8c" stroke-width="0.8"/><rect x="506" y="350.5" width="14.700000000000045" height="7.699999999999989" fill="#d9d9d9" stroke="#8c8c8c" stroke-width="0.8"/>
<path d="M500.8 362.5 L503.0 360.3 L514.2 360.3 L512 362.5 Z" fill="#fff" stroke="#8c8c8c" stroke-width="0.8"/><path d="M512 362.5 L514.2 360.3 L514.2 368.1 L512 370.3 Z" fill="#cfcfcf" stroke="#8c8c8c" stroke-width="0.8"/><rect x="500.8" y="362.5" width="11.199999999999989" height="7.800000000000011" fill="#fff" stroke="#8c8c8c" stroke-width="0.8"/>
<path d="M512 362.5 L514.2 360.3 L528.8000000000001 360.3 L526.6 362.5 Z" fill="#fff" stroke="#8c8c8c" stroke-width="0.8"/><path d="M526.6 362.5 L528.8000000000001 360.3 L528.8000000000001 368.1 L526.6 370.3 Z" fill="#cfcfcf" stroke="#8c8c8c" stroke-width="0.8"/><rect x="512" y="362.5" width="14.600000000000023" height="7.800000000000011" fill="#d9d9d9" stroke="#8c8c8c" stroke-width="0.8"/>
<path d="M553.3 346.5 V372.5 H578.9" stroke="#8c8c8c" stroke-width="0.9" fill="none"/><path d="M550.8 375.8 L553.8 372.5" stroke="#8c8c8c" stroke-width="0.9"/>
<path d="M552.7 350.5 L554.9000000000001 348.3 L560.9000000000001 348.3 L558.7 350.5 Z" fill="#fff" stroke="#8c8c8c" stroke-width="0.8"/><path d="M558.7 350.5 L560.9000000000001 348.3 L560.9000000000001 356.0 L558.7 358.2 Z" fill="#cfcfcf" stroke="#8c8c8c" stroke-width="0.8"/><rect x="552.7" y="350.5" width="6.0" height="7.699999999999989" fill="#fff" stroke="#8c8c8c" stroke-width="0.8"/>
<path d="M558.7 350.5 L560.9000000000001 348.3 L578.7 348.3 L576.5 350.5 Z" fill="#fff" stroke="#8c8c8c" stroke-width="0.8"/><path d="M576.5 350.5 L578.7 348.3 L578.7 356.0 L576.5 358.2 Z" fill="#cfcfcf" stroke="#8c8c8c" stroke-width="0.8"/><rect x="558.7" y="350.5" width="17.799999999999955" height="7.699999999999989" fill="#d9d9d9" stroke="#8c8c8c" stroke-width="0.8"/>
<path d="M552.7 362.5 L554.9000000000001 360.3 L566.1 360.3 L563.9 362.5 Z" fill="#fff" stroke="#8c8c8c" stroke-width="0.8"/><path d="M563.9 362.5 L566.1 360.3 L566.1 368.1 L563.9 370.3 Z" fill="#cfcfcf" stroke="#8c8c8c" stroke-width="0.8"/><rect x="552.7" y="362.5" width="11.199999999999932" height="7.800000000000011" fill="#fff" stroke="#8c8c8c" stroke-width="0.8"/>
<path d="M563.9 362.5 L566.1 360.3 L578.7 360.3 L576.5 362.5 Z" fill="#fff" stroke="#8c8c8c" stroke-width="0.8"/><path d="M576.5 362.5 L578.7 360.3 L578.7 368.1 L576.5 370.3 Z" fill="#cfcfcf" stroke="#8c8c8c" stroke-width="0.8"/><rect x="563.9" y="362.5" width="12.600000000000023" height="7.800000000000011" fill="#d9d9d9" stroke="#8c8c8c" stroke-width="0.8"/>
<path d="M440.5 392 V404.2 H453.5" stroke="#777" stroke-width="0.9" fill="none"/><path d="M442.8 404 V397.5 H444.6 V404 M445.8 404 V394 H447.6 V404 M448.8 404 V398.5 H450.6 V404 M451.3 404 V396 H453 V404" stroke="#777" stroke-width="0.8" fill="none"/></svg>
<div style="position:absolute;left:444.70px;top:112.06px;height:0;white-space:nowrap;font:700 10.5px 'Liberation Sans', sans-serif;line-height:0;color:#555555;transform:scaleX(1.0410);transform-origin:0 0;">2-D Column</div>
<div style="position:absolute;left:444.70px;top:183.16px;height:0;white-space:nowrap;font:700 10.5px 'Liberation Sans', sans-serif;line-height:0;color:#555555;transform:scaleX(1.0410);transform-origin:0 0;">3-D Column</div>
<div style="position:absolute;left:444.50px;top:254.26px;height:0;white-space:nowrap;font:700 10.5px 'Liberation Sans', sans-serif;line-height:0;color:#555555;transform:scaleX(1.0548);transform-origin:0 0;">2-D Bar</div>
<div style="position:absolute;left:444.20px;top:325.56px;height:0;white-space:nowrap;font:700 10.5px 'Liberation Sans', sans-serif;line-height:0;color:#555555;transform:scaleX(1.0575);transform-origin:0 0;">3-D Bar</div>
<div style="position:absolute;left:464.60px;top:399.29px;height:0;white-space:nowrap;font:400 11px 'Liberation Sans', sans-serif;line-height:0;color:#6a6a6a;transform:scaleX(0.9558);transform-origin:0 0;-webkit-text-stroke:0.18px #6a6a6a;">More Column Charts...</div>
<div style="position:absolute;left:464.6px;top:405px;width:8.5px;height:1px;background:#777;"></div>
<div style="position:absolute;left:436px;top:241px;width:208.5px;height:77.5px;border:4.3px solid #f00000;box-sizing:border-box;border-radius:3px"></div>
</body></html>
